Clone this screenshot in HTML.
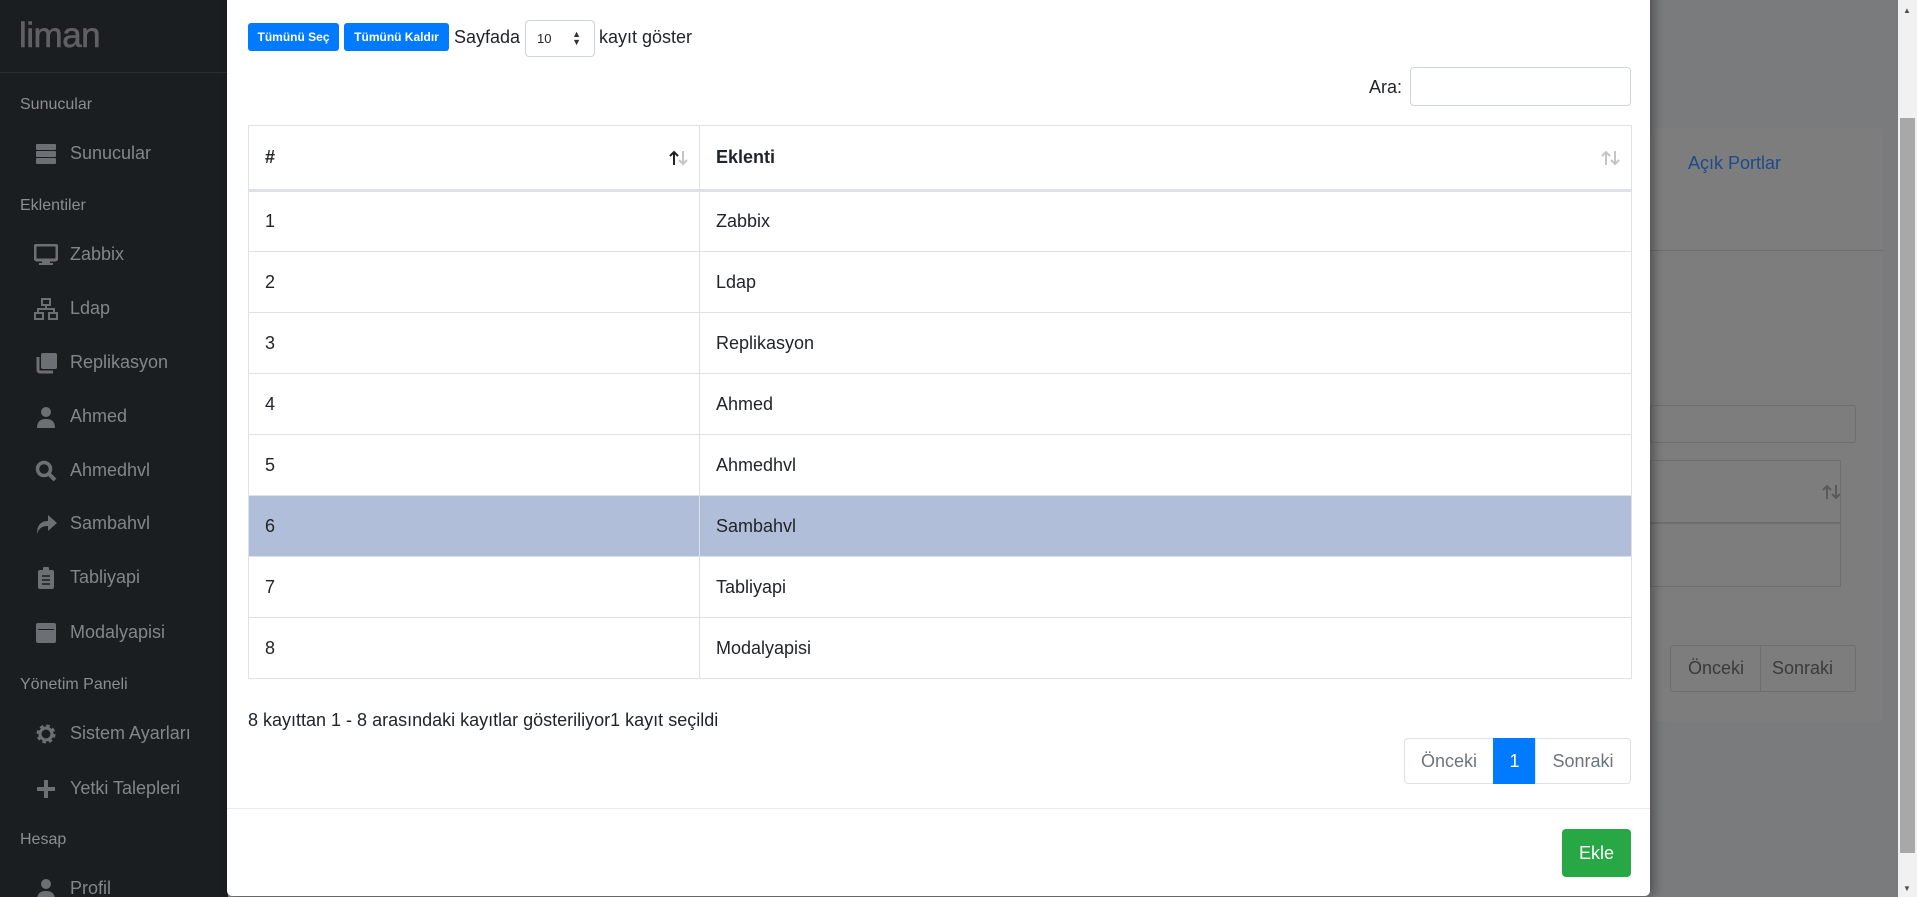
<!DOCTYPE html>
<html style="overflow:hidden;width:1917px;height:897px"><head><meta charset="utf-8"><style>
*{box-sizing:border-box;margin:0;padding:0}
body{width:1917px;height:897px;overflow:hidden;background:#7a7b7c;font-family:"Liberation Sans",sans-serif;position:relative;color:#212529}
.abs{position:absolute}
#sb{left:0;top:0;width:228px;height:897px;background:#1b1e21}
.logo{left:19px;top:16px;font-size:35px;color:#5e6063;font-weight:normal;letter-spacing:-0.5px;-webkit-text-stroke:0.6px #5e6063}
.sbline{left:0;width:228px;height:1px;background:#2b2f33}
.hd{left:20px;font-size:16px;color:#8a8e92}
.it{left:70px;font-size:18px;color:#82868a}
.ic{left:34px;width:24px;height:22px}
#bg .card{left:1650px;top:128px;width:233px;height:593px;background:#7d7d7d;border-radius:4px}
#modal{left:227px;top:-10px;width:1423px;height:906px;background:#fff;border-radius:0 0 5px 5px;box-shadow:4px 0 10px rgba(0,0,0,.35)}
.btn{position:absolute;top:23px;height:28px;background:#007bff;color:#fff;font-size:12px;font-weight:bold;border-radius:3px;line-height:28px;text-align:center}
.t{font-size:18px;color:#212529}
table{position:absolute;left:248px;top:125px;width:1384px;border-collapse:collapse;border:1px solid #dee2e6}
td,th{border:1px solid #dee2e6;height:61px;padding-left:16px;font-size:18px;text-align:left;vertical-align:middle;color:#212529}
th{height:65px;border-bottom:3px solid #dee2e6;font-weight:bold;position:relative}
tr.sel td{background:#b0bed9}
.sort{position:absolute;right:10px;top:24px;width:20px;height:16px}
.pg{position:absolute;top:738px;height:46px;border:1px solid #dee2e6;font-size:18px;color:#6c757d;line-height:44px;text-align:center}
</style></head><body>
<div id="sb" class="abs">
<div class="abs logo">liman</div>
<div class="abs sbline" style="top:72px"></div>
<div class="abs hd" style="top:96px">Sunucular</div>
<svg class="abs ic" style="top:143px" viewBox="0 0 24 22"><rect x="2" y="1" width="20" height="6" rx="1" fill="#6c6f73"/><rect x="2" y="8" width="20" height="6" rx="1" fill="#6c6f73"/><rect x="2" y="15" width="20" height="6" rx="1" fill="#6c6f73"/></svg>
<div class="abs it" style="top:143px">Sunucular</div>
<div class="abs hd" style="top:197px">Eklentiler</div>
<svg class="abs ic" style="top:244px" viewBox="0 0 24 22"><rect x="1" y="1" width="22" height="15" rx="2" fill="none" stroke="#6c6f73" stroke-width="3"/><rect x="8" y="17" width="8" height="3" fill="#6c6f73"/><rect x="5" y="19" width="14" height="2" fill="#6c6f73"/></svg>
<div class="abs it" style="top:244px">Zabbix</div>
<svg class="abs ic" style="top:298px" viewBox="0 0 24 22"><rect x="8" y="1" width="8" height="6" fill="none" stroke="#6c6f73" stroke-width="2"/><path d="M12 7v4M3 11h18M4 11v4M20 11v4" stroke="#6c6f73" stroke-width="2"/><rect x="1" y="15" width="8" height="6" fill="none" stroke="#6c6f73" stroke-width="2"/><rect x="15" y="15" width="8" height="6" fill="none" stroke="#6c6f73" stroke-width="2"/></svg>
<div class="abs it" style="top:298px">Ldap</div>
<svg class="abs ic" style="top:352px" viewBox="0 0 24 22"><rect x="7" y="1" width="16" height="16" rx="2" fill="#6c6f73"/><path d="M4 5v13a2 2 0 0 0 2 2h13" fill="none" stroke="#6c6f73" stroke-width="3"/></svg>
<div class="abs it" style="top:352px">Replikasyon</div>
<svg class="abs ic" style="top:406px" viewBox="0 0 24 22"><circle cx="12" cy="6" r="5" fill="#6c6f73"/><path d="M3 22c0-7 4-9 9-9s9 2 9 9z" fill="#6c6f73"/></svg>
<div class="abs it" style="top:406px">Ahmed</div>
<svg class="abs ic" style="top:460px" viewBox="0 0 24 22"><circle cx="10" cy="9" r="6.5" fill="none" stroke="#6c6f73" stroke-width="3.5"/><path d="M15 14l6 6" stroke="#6c6f73" stroke-width="4"/></svg>
<div class="abs it" style="top:460px">Ahmedhvl</div>
<svg class="abs ic" style="top:513px" viewBox="0 0 24 22"><path d="M14 2l9 8-9 8v-5c-6 0-9 2-11 8 0-9 4-13 11-13z" fill="#6c6f73"/></svg>
<div class="abs it" style="top:513px">Sambahvl</div>
<svg class="abs ic" style="top:567px" viewBox="0 0 24 22"><rect x="4" y="3" width="16" height="19" rx="2" fill="#6c6f73"/><rect x="9" y="0" width="6" height="5" rx="1" fill="#6c6f73"/><path d="M8 9h8M8 13h8M8 17h8" stroke="#1b1e21" stroke-width="1.5"/></svg>
<div class="abs it" style="top:567px">Tabliyapi</div>
<svg class="abs ic" style="top:622px" viewBox="0 0 24 22"><rect x="2" y="1" width="20" height="20" rx="2" fill="#6c6f73"/><rect x="4" y="7" width="16" height="1" fill="#1b1e21"/></svg>
<div class="abs it" style="top:622px">Modalyapisi</div>
<div class="abs hd" style="top:676px">Yönetim Paneli</div>
<svg class="abs ic" style="top:723px" viewBox="0 0 24 22"><circle cx="12" cy="11" r="7" fill="none" stroke="#6c6f73" stroke-width="5" stroke-dasharray="3 2.5"/><circle cx="12" cy="11" r="6" fill="none" stroke="#6c6f73" stroke-width="3"/></svg>
<div class="abs it" style="top:723px">Sistem Ayarları</div>
<svg class="abs ic" style="top:778px" viewBox="0 0 24 22"><path d="M12 2v18M3 11h18" stroke="#6c6f73" stroke-width="4"/></svg>
<div class="abs it" style="top:778px">Yetki Talepleri</div>
<div class="abs hd" style="top:831px">Hesap</div>
<svg class="abs ic" style="top:878px" viewBox="0 0 24 22"><circle cx="12" cy="6" r="5" fill="#6c6f73"/><path d="M3 22c0-7 4-9 9-9s9 2 9 9z" fill="#6c6f73"/></svg>
<div class="abs it" style="top:878px">Profil</div>
</div>

<div id="bg">
<div class="abs card"></div>
<div class="abs" style="left:1650px;top:250px;width:233px;height:1px;background:#6e6e6e"></div>
<div class="abs" style="left:1688px;top:153px;font-size:18px;color:#1d4a8a">Açık Portlar</div>
<div class="abs" style="left:1650px;top:405px;width:206px;height:38px;border:1px solid #6e6e6e;border-radius:3px"></div>
<div class="abs" style="left:1650px;top:460px;width:191px;height:127px;border:1px solid #6e6e6e"></div>
<div class="abs" style="left:1650px;top:522px;width:191px;height:2px;background:#6e6e6e"></div>
<svg class="abs" style="left:1822px;top:484px" width="20" height="16" viewBox="0 0 20 16"><path d="M5 15V2M1 6l4-4 4 4" fill="none" stroke="#5a5a5a" stroke-width="2"/><path d="M14 1v13M10 10l4 4 4-4" fill="none" stroke="#5a5a5a" stroke-width="2"/></svg>
<div class="abs" style="left:1670px;top:645px;width:186px;height:47px;border:1px solid #6e6e6e;border-radius:3px"></div>
<div class="abs" style="left:1760px;top:645px;width:1px;height:47px;background:#6e6e6e"></div>
<div class="abs" style="left:1688px;top:658px;font-size:18px;color:#3a3a3a">Önceki</div>
<div class="abs" style="left:1772px;top:658px;font-size:18px;color:#3a3a3a">Sonraki</div>
<div class="abs" style="left:1898px;top:0;width:19px;height:897px;background:#f1f1f1"></div>
<div class="abs" style="left:1900px;top:118px;width:15px;height:735px;background:#a8a8a8"></div>
<div class="abs" style="left:1903px;top:6px;font-size:8px;color:#505050">▲</div>
<div class="abs" style="left:1903px;top:884px;font-size:8px;color:#505050">▼</div>
</div>

<div id="modal" class="abs"></div>
<div class="btn" style="left:248px;width:91px">Tümünü Seç</div>
<div class="btn" style="left:344px;width:105px">Tümünü Kaldır</div>
<div class="abs t" style="left:454px;top:27px">Sayfada</div>
<div class="abs" style="left:525px;top:20px;width:70px;height:37px;border:1px solid #ced4da;border-radius:4px;font-size:13px;padding:10px 0 0 11px">10<span style="position:absolute;right:13px;top:9px;font-size:9px;line-height:8px;color:#333">▲<br>▼</span></div>
<div class="abs t" style="left:599px;top:27px">kayıt göster</div>
<div class="abs t" style="left:1369px;top:77px">Ara:</div>
<div class="abs" style="left:1410px;top:67px;width:221px;height:39px;border:1px solid #ced4da;border-radius:4px"></div>

<table>
<tr><th style="width:451px">#<svg class="sort" viewBox="0 0 20 16"><path d="M5 15V2M1 6l4-4 4 4" fill="none" stroke="#222" stroke-width="2"/><path d="M14 1v13M10 10l4 4 4-4" fill="none" stroke="#c4c4c4" stroke-width="2"/></svg></th><th>Eklenti<svg class="sort" viewBox="0 0 20 16"><path d="M5 15V2M1 6l4-4 4 4" fill="none" stroke="#c4c4c4" stroke-width="2"/><path d="M14 1v13M10 10l4 4 4-4" fill="none" stroke="#c4c4c4" stroke-width="2"/></svg></th></tr>
<tr><td>1</td><td>Zabbix</td></tr>
<tr><td>2</td><td>Ldap</td></tr>
<tr><td>3</td><td>Replikasyon</td></tr>
<tr><td>4</td><td>Ahmed</td></tr>
<tr><td>5</td><td>Ahmedhvl</td></tr>
<tr class="sel"><td>6</td><td>Sambahvl</td></tr>
<tr><td>7</td><td>Tabliyapi</td></tr>
<tr><td>8</td><td>Modalyapisi</td></tr>
</table>

<div class="abs t" style="left:248px;top:710px">8 kayıttan 1 - 8 arasındaki kayıtlar gösteriliyor1 kayıt seçildi</div>
<div class="pg" style="left:1404px;width:90px;border-radius:4px 0 0 4px">Önceki</div>
<div class="pg" style="left:1493px;width:43px;background:#007bff;border-color:#007bff;color:#fff">1</div>
<div class="pg" style="left:1535px;width:96px;border-radius:0 4px 4px 0">Sonraki</div>
<div class="abs" style="left:227px;top:808px;width:1423px;height:1px;background:#e9ecef"></div>
<div class="abs" style="left:1562px;top:829px;width:69px;height:48px;background:#28a745;border-radius:4px;color:#fff;font-size:18px;line-height:48px;text-align:center">Ekle</div>
</body></html>
